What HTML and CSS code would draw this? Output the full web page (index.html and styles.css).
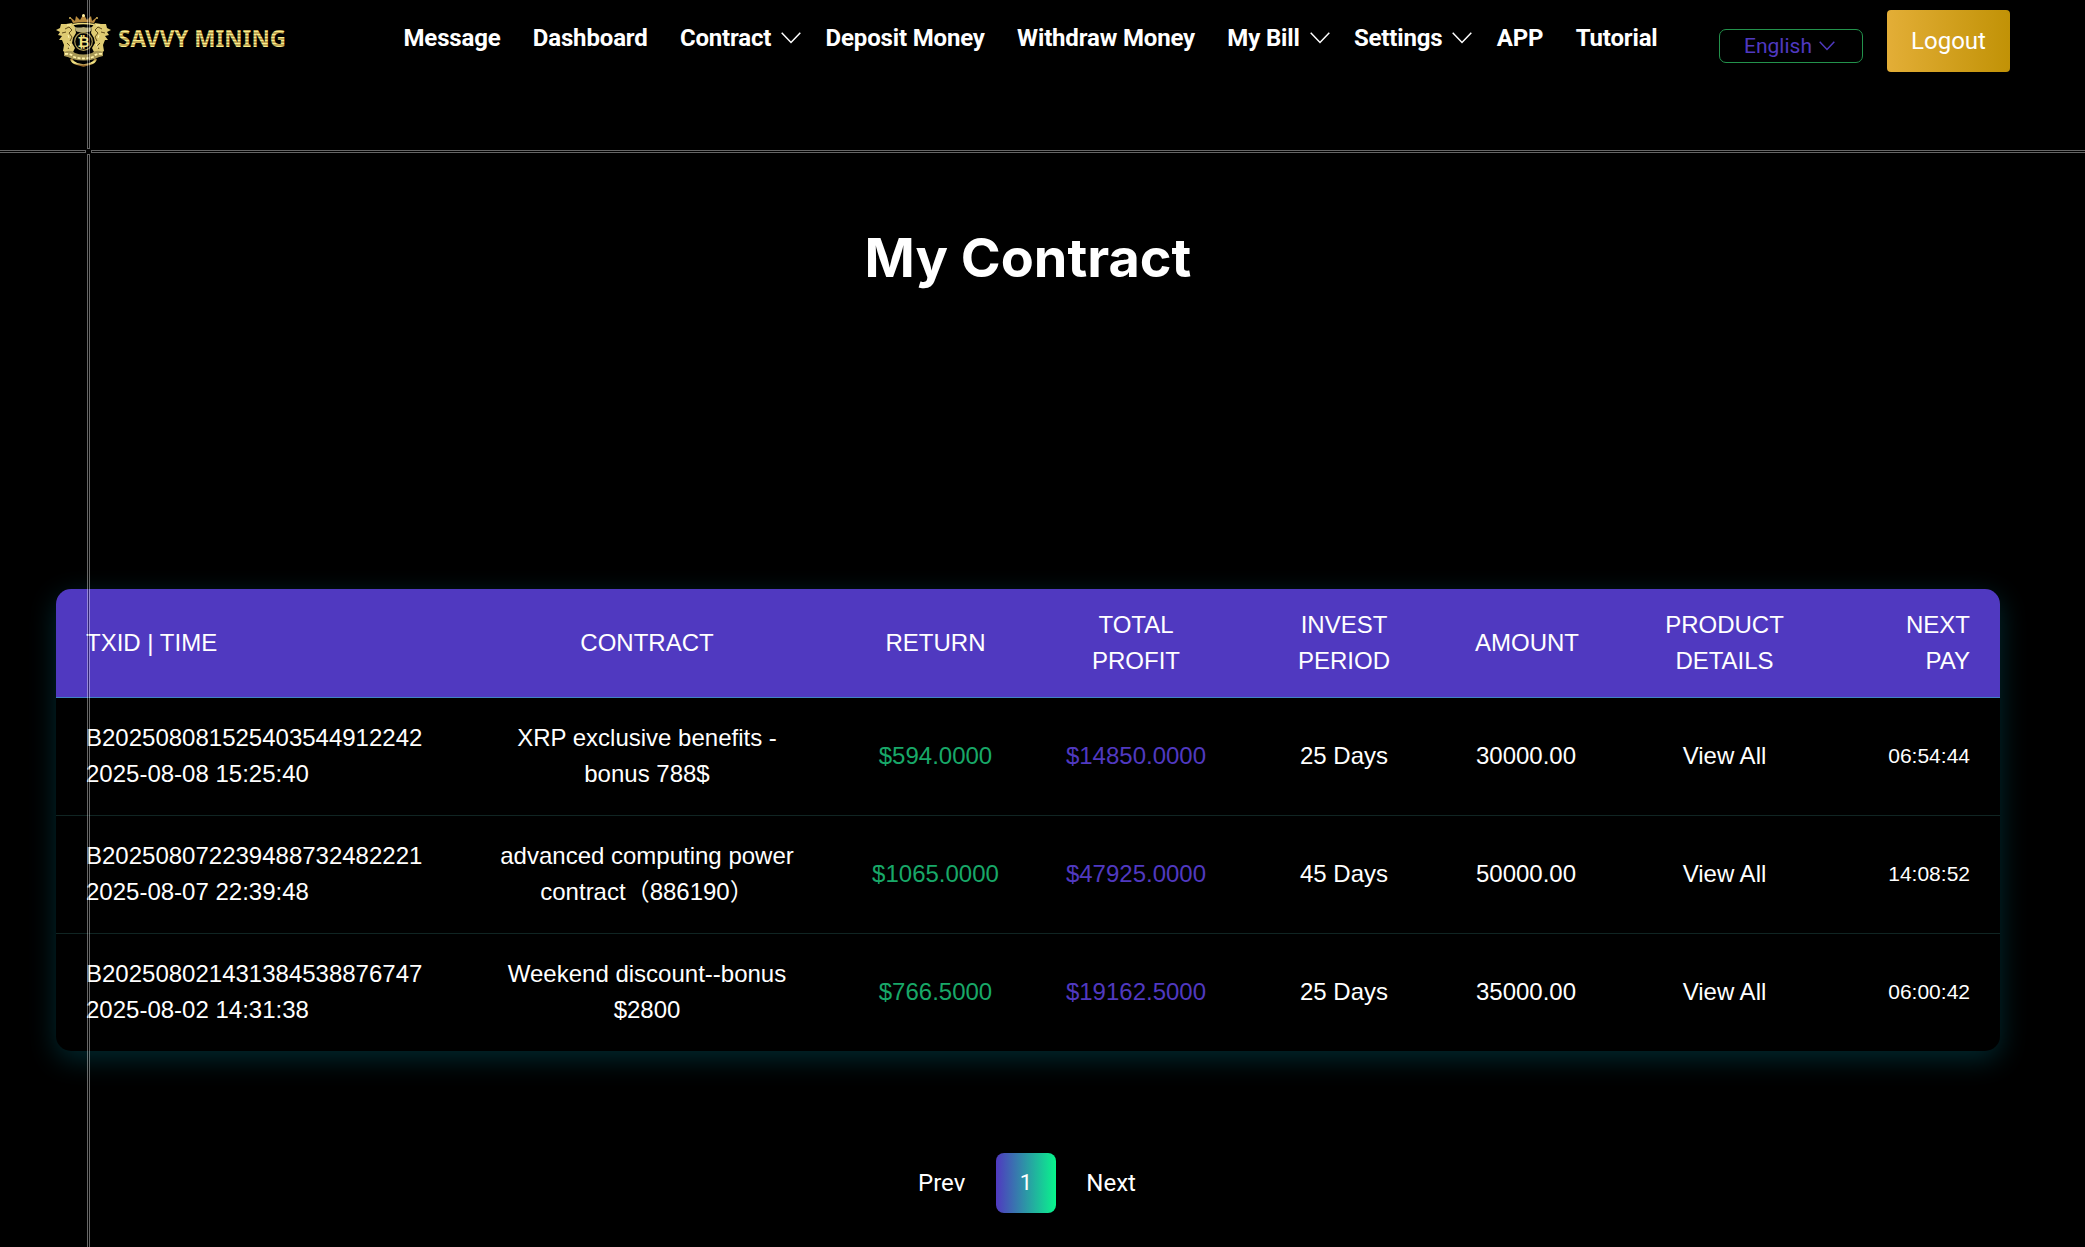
FILE: index.html
```html
<!DOCTYPE html>
<html lang="en">
<head>
<meta charset="utf-8">
<title>My Contract</title>
<link rel="stylesheet" href="styles.css">
</head>
<body>
<header class="header">
  <a class="logo">
    <svg class="logo-art" width="250" height="64" viewBox="0 0 250 64">
      <defs>
        <linearGradient id="gold" x1="0" y1="0" x2="0" y2="1">
          <stop offset="0" stop-color="#a47a35"/><stop offset=".35" stop-color="#e6d572"/><stop offset=".6" stop-color="#f7eb8d"/><stop offset="1" stop-color="#96692c"/>
        </linearGradient>
        <linearGradient id="stripe" x1="0" y1="0" x2="0" y2="3" gradientUnits="userSpaceOnUse" spreadMethod="repeat">
          <stop offset="0" stop-color="#a68437"/><stop offset=".5" stop-color="#f8ee8c"/><stop offset="1" stop-color="#a68437"/>
        </linearGradient>
        <g id="lion">
          <path fill="#dfcb71" d="M13 18l6-1 3 4 1 6-3 5-1 5 3 5-3 6h-4l-5-3 1-6-2-5-3 0 3-4-4-1 2-3-4-2 4-2 1-4z"/>
          <path fill="none" stroke="#624d1b" d="M12 23l4-2 3 3-3 3 3 4-2 4M14 37l3 3-2 3M9 27l4-1"/>
          <path fill="none" stroke="#fff5b0" d="M14 19l4 0M15 29l1 3M18 38l-2 4"/>
        </g>
      </defs>
      <use href="#lion" transform="translate(3 0)"/>
      <use href="#lion" transform="matrix(-1 0 0 1 64 0)"/>
      <path d="M23 17l-3-6 5 4 1-5 4 4 3.500-6 3.500 6 4-4 1 5 5-4-3 6-10-1z" fill="#b98b3e"/>
      <path d="M23 18.500q10-2 21 0" fill="none" stroke="#f0dc7c" stroke-width="1.300"/>
      <circle cx="33.500" cy="9.500" r="1.500" fill="#fff0a0"/><circle cx="20" cy="12" r="1" fill="#d9b85e"/><circle cx="47" cy="12" r="1" fill="#d9b85e"/>
      <path d="M25 21q4 1 8.500 0 4.500 1 8.500 0 0 5-4 5l-4.500 1-4.500-1q-4 0-4-5z" fill="#b8ad78"/>
      <circle cx="33.500" cy="35.500" r="8.800" fill="#030303" stroke="#a99752" stroke-width="1.200"/>
      <text x="33.500" y="41" class="logo-coin" text-anchor="middle">₿</text>
      <path d="M14 46q7-3 11 1 8 3 17 0 4-4 11-1v4q-5 1-8 3-11 3-23 0-3-2-8-3z" fill="#a79755"/>
      <path d="M15 48q6-1 9 3 9 3 19 0 3-4 9-3" fill="none" stroke="#fff1a5" stroke-dasharray="3 1.500" stroke-width="1.800"/>
      <path d="M21 53q2 4 6 5 4 1 6.500 1.500 2.500-.5 6.500-1.500 4-1 6-5" fill="none" stroke="url(#gold)" stroke-width="2.300"/>
      <text x="68" y="41" class="logo-name" textLength="168" lengthAdjust="spacingAndGlyphs">SAVVY MINING</text>
    </svg>
  </a>
  <nav class="nav">
    <a>Message</a>
    <a>Dashboard</a>
    <a class="has-menu">Contract <svg class="chevron" viewBox="0 0 20 12"><path d="M.7 .7L10 10.500 19.300 .7"/></svg></a>
    <a>Deposit Money</a>
    <a>Withdraw Money</a>
    <a class="has-menu">My Bill <svg class="chevron" viewBox="0 0 20 12"><path d="M.7 .7L10 10.500 19.300 .7"/></svg></a>
    <a class="has-menu">Settings <svg class="chevron" viewBox="0 0 20 12"><path d="M.7 .7L10 10.500 19.300 .7"/></svg></a>
    <a>APP</a>
    <a>Tutorial</a>
  </nav>
  <div class="language">English <svg class="language-chevron" viewBox="0 0 16 10"><path d="M.7 .7L8 8.500 15.300 .7"/></svg></div>
  <a class="logout">Logout</a>
</header>
<main>
  <h1 class="title">My Contract</h1>
  <table class="contracts">
    <colgroup><col class="c-id"><col class="c-contract"><col class="c-return"><col class="c-total"><col class="c-period"><col class="c-amount"><col class="c-details"><col class="c-next"></colgroup>
    <thead>
      <tr><th>TXID | TIME</th><th>CONTRACT</th><th>RETURN</th><th>TOTAL PROFIT</th><th>INVEST PERIOD</th><th>AMOUNT</th><th>PRODUCT DETAILS</th><th>NEXT<br>PAY</th></tr>
    </thead>
    <tbody>
      <tr><td>B202508081525403544912242<br>2025-08-08 15:25:40</td><td>XRP exclusive benefits - bonus 788$</td><td class="return">$594.0000</td><td class="total">$14850.0000</td><td>25 Days</td><td>30000.00</td><td>View All</td><td class="timer">06:54:44</td></tr>
      <tr><td>B202508072239488732482221<br>2025-08-07 22:39:48</td><td>advanced computing power contract（886190）</td><td class="return">$1065.0000</td><td class="total">$47925.0000</td><td>45 Days</td><td>50000.00</td><td>View All</td><td class="timer">14:08:52</td></tr>
      <tr><td>B202508021431384538876747<br>2025-08-02 14:31:38</td><td>Weekend discount--bonus $2800</td><td class="return">$766.5000</td><td class="total">$19162.5000</td><td>25 Days</td><td>35000.00</td><td>View All</td><td class="timer">06:00:42</td></tr>
    </tbody>
  </table>
  <div class="pagination"><a>Prev</a><a class="current">1</a><a>Next</a></div>
</main>
<div class="guide guide-left"></div>
<div class="guide guide-right"></div>
<div class="guide guide-top"></div>
<div class="guide guide-bottom"></div>
</body>
</html>
```
FILE: styles.css
```css
* { box-sizing: border-box; }
html, body { height: 100%; }
body {
  margin: 0;
  position: relative;
  overflow: hidden;
  background: #000;
  color: #fff;
  font-family: Roboto, sans-serif;
  font-size: 24px;
}
.header { display: flex; align-items: flex-start; height: 150px; padding-left: 50px; }
.logo { width: 353.5px; padding-top: 6px; }
.logo-art { display: block; }
.logo-name { font: 700 24px "Noto Sans", sans-serif; fill: url(#stripe); }
.logo-coin { font: 700 15px "DejaVu Sans", sans-serif; fill: #f3df7c; }
.nav { display: flex; gap: 32.3px; width: 1315.5px; padding-top: 20px; font-weight: 700; line-height: 36px; white-space: nowrap; letter-spacing: -0.16px; }
.has-menu { display: flex; align-items: center; gap: 10px; margin-right: -8px; }
.chevron { width: 20px; height: 12px; fill: none; stroke: #fff; stroke-width: 1.5; }
.language {
  display: flex; align-items: center; gap: 7px;
  width: 144px; height: 34px; margin: 29px 24px 0 0; padding-left: 24px;
  border: 1px solid #23924c; border-radius: 7px;
  color: #5039c0; font-size: 21px;
}
.language-chevron { width: 16px; height: 10px; fill: none; stroke: #5039c0; stroke-width: 1.5; }
.logout {
  width: 123px; height: 62px; margin-top: 10px;
  border-radius: 4px; background: linear-gradient(90deg, #e3ae37, #c19206);
  line-height: 62px; text-align: center;
}
.title {
  width: 1944px; margin: 75px 0 0 56px; height: 66px;
  font: 700 54px/66px Inter, sans-serif; text-align: center;
}
.contracts {
  width: 1944px; margin: 298px 0 0 56px;
  table-layout: fixed; border-collapse: separate; border-spacing: 0;
  border-radius: 15px; overflow: hidden;
  box-shadow: 0 8px 28px rgba(0, 210, 240, .2);
  background: #000;
  font: 24px/36px "Liberation Sans", "Noto Sans CJK SC", sans-serif;
  text-align: center;
}
.c-id { width: 396px; }
.c-contract { width: 390px; }
.c-return { width: 187px; }
.c-total { width: 214px; }
.c-period { width: 202px; }
.c-amount { width: 162px; }
.c-details { width: 235px; }
.c-next { width: 158px; }
.contracts th { padding: 18px 30px; font-weight: 400; background: #5039c0; border-bottom: 1px solid #3f84c4; }
.contracts td { height: 118px; padding: 0 30px 2px; vertical-align: middle; border-bottom: 1px solid #102523; }
.contracts tr:last-child td { height: 117px; border-bottom: 0; }
.contracts th:first-child, .contracts td:first-child { text-align: left; }
.contracts th:last-child, .contracts td:last-child { text-align: right; }
.return { color: #18a868; }
.total { color: #5039c0; }
.contracts .timer { font-size: 21px; }
.pagination { display: flex; justify-content: center; align-items: center; gap: 30.5px; width: 1943px; margin: 102px 0 0 55.5px; line-height: 60px; }
.current { width: 60px; height: 60px; border-radius: 8px; background: linear-gradient(90deg, #5039c0, #08f58c); text-align: center; font-size: 22px; }

/* crosshair guides lying over the page */
.guide { position: absolute; border: 1px solid rgba(255, 255, 255, .4); background: rgba(0, 0, 0, .4); background-clip: padding-box; pointer-events: none; }
.guide-left, .guide-right { top: 150px; height: 3px; }
.guide-top, .guide-bottom { left: 87px; width: 3px; }
.guide-left { left: -1px; width: 87px; }
.guide-right { left: 91px; right: -1px; }
.guide-top { top: -1px; height: 150px; }
.guide-bottom { top: 154px; bottom: -1px; }
```
